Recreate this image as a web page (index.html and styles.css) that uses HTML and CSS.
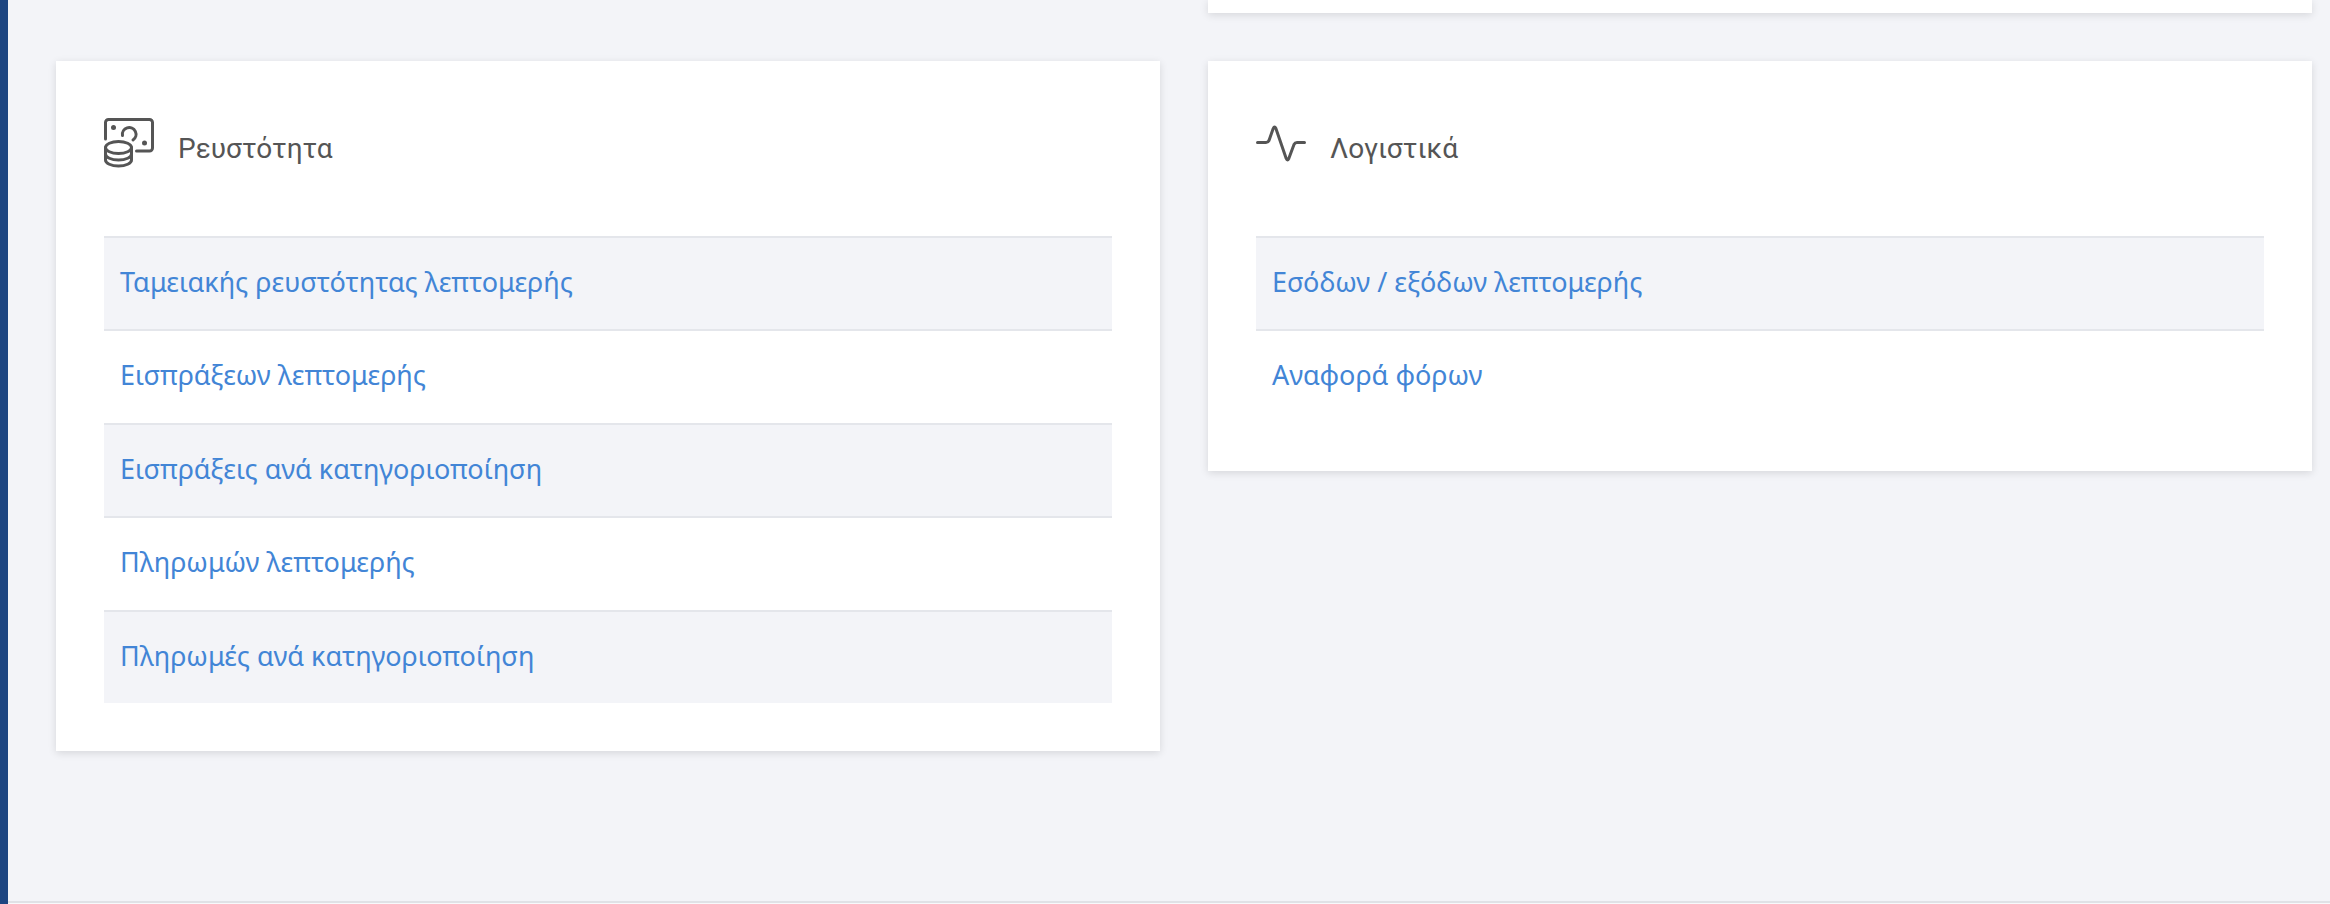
FILE: index.html
```
<!DOCTYPE html>
<html lang="el">
<head>
  <meta charset="UTF-8">
  <title>Αναφορές</title>
  <link rel="stylesheet" href="styles.css">
</head>
<body>

  <aside class="sidebar"></aside>

  <div class="page">
    <main class="reports">
      <div class="column">
        <div class="card-spacer"></div>
        <section class="card">
          <header class="card-header">
            <svg class="icon" viewBox="0 0 50 50" aria-hidden="true">
              <path d="M1.5 21V4.500a3 3 0 0 1 3-3H45.500a3 3 0 0 1 3 3V30a3 3 0 0 1-3 3H32.500"/>
              <path d="M18.500 17.500a6.800 6.800 0 1 1 10.500 4.500"/>
              <ellipse cx="14.500" cy="29.500" rx="13" ry="6"/>
              <path d="M1.500 29.500V42c0 3.300 5.800 6 13 6s13-2.700 13-6V29.500"/>
              <path d="M1.500 36c0 3.300 5.800 6 13 6s13-2.700 13-6"/>
              <circle class="dot" cx="9.500" cy="9.500" r="2.500"/>
              <circle class="dot" cx="40.500" cy="25" r="2.500"/>
            </svg>
            <h2>Ρευστότητα</h2>
          </header>
          <ul class="report-list">
            <li><a href="#">Ταμειακής ρευστότητας λεπτομερής</a></li>
            <li><a href="#">Εισπράξεων λεπτομερής</a></li>
            <li><a href="#">Εισπράξεις ανά κατηγοριοποίηση</a></li>
            <li><a href="#">Πληρωμών λεπτομερής</a></li>
            <li><a href="#">Πληρωμές ανά κατηγοριοποίηση</a></li>
          </ul>
        </section>
      </div>

      <div class="column">
        <!-- end of the card above -->
        <div class="card card-end"></div>
        <section class="card">
          <header class="card-header">
            <svg class="icon" viewBox="0 0 50 50" aria-hidden="true">
              <path d="M1.500 24.500H10q2 0 3-2L17.200 10.500q1.300-3 2.700 0L30.200 40.500q1.200 3 2.600 0L38 26.500q1-2 3-2H48.500"/>
            </svg>
            <h2>Λογιστικά</h2>
          </header>
          <ul class="report-list">
            <li><a href="#">Εσόδων / εξόδων λεπτομερής</a></li>
            <li><a href="#">Αναφορά φόρων</a></li>
          </ul>
        </section>
      </div>
    </main>

    <footer class="footer"></footer>
  </div>

</body>
</html>
```
FILE: styles.css
```
* {
  box-sizing: border-box;
}

body {
  margin: 0;
  display: flex;
  min-height: 100vh;
  background: #f3f4f8;
  color: #555;
  font-family: "Noto Sans", sans-serif;
}

.sidebar {
  width: 8px;
  background: #1d4581;
}

.page {
  flex: 1;
  display: flex;
  flex-direction: column;
}

.reports {
  flex: 1;
  display: grid;
  grid-template-columns: 1fr 1fr;
  gap: 48px;
  padding: 0 18px 48px 48px;
}

.column {
  display: flex;
  flex-direction: column;
  gap: 48px;
}

.card {
  padding: 48px;
  background: #fff;
  box-shadow: 0 2px 8px rgba(0, 0, 0, 0.12);
}

.card-end,
.card-spacer {
  height: 13px;
  padding: 0;
}

.card-header {
  display: flex;
  align-items: center;
  gap: 24px;
  height: 68px;
  margin-bottom: 59px;
}

.icon {
  width: 50px;
  height: 50px;
  fill: none;
  stroke: #555;
  stroke-width: 3;
  stroke-linecap: round;
  stroke-linejoin: round;
}

.icon .dot {
  fill: #555;
  stroke: none;
}

h2 {
  margin: 0;
  padding-top: 10px;
  font-family: Roboto, sans-serif;
  font-size: 28px;
  font-weight: 400;
}

.report-list {
  margin: 0;
  padding: 0;
  list-style: none;
}

.report-list li {
  height: 93px;
  padding: 0 16px;
  border-top: 2px solid #e4e6eb;
  font-size: 27px;
  line-height: 88px;
}

.report-list li:nth-child(odd) {
  background: #f3f4f8;
}

.report-list li:nth-child(even) {
  height: 94px;
}

.report-list a {
  color: #4285d6;
  text-decoration: none;
}

.report-list a:hover {
  text-decoration: underline;
}

.footer {
  height: 3px;
  border-top: 2px solid #e0e2e6;
  background: #f8f9fb;
}
```
